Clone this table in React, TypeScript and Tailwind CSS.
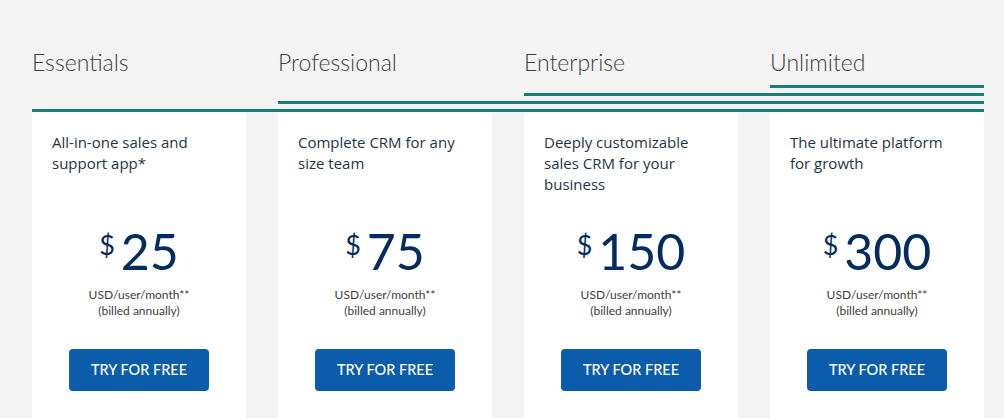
const plans = [
  { name: 'Essentials', desc: 'All-in-one sales and support app*', price: '25' },
  { name: 'Professional', desc: 'Complete CRM for any size team', price: '75' },
  { name: 'Enterprise', desc: 'Deeply customizable sales CRM for your business', price: '150' },
  { name: 'Unlimited', desc: 'The ultimate platform for growth', price: '300' },
]

export default function App() {
  return (
    <div className="h-[418px] overflow-hidden bg-[#f3f3f3] pl-8 pr-5 pt-[48px] font-['Lato','Liberation_Sans',sans-serif]">
      <div className="grid grid-cols-4 gap-8">
        {plans.map((p) => (
          <div key={p.name} className="text-[23px] font-light leading-[28px] text-[#3e3e3c]">
            {p.name}
          </div>
        ))}
      </div>

      <div className="mt-[9px] flex flex-col gap-[5px]">
        <div className="ml-[738px] h-[3px] bg-[#1b7c75]" />
        <div className="ml-[492px] h-[3px] bg-[#1b7c75]" />
        <div className="ml-[246px] h-[3px] bg-[#1b7c75]" />
        <div className="h-[3px] bg-[#1b7c75]" />
      </div>

      <div className="grid grid-cols-4 gap-8">
        {plans.map((p) => (
          <div key={p.name} className="h-[320px] bg-white px-5 pt-[20px]">
            <p className="h-[63px] font-['Open_Sans','Liberation_Sans',sans-serif] text-[15px] leading-[21px] text-[#243447]">
              {p.desc}
            </p>
            <div className="mt-[34px] flex items-start justify-center text-[#032d60]">
              <span className="mr-[6px] mt-[2px] text-[27px] leading-none">$</span>
              <span className="text-[50px] leading-[44px]">{p.price}</span>
            </div>
            <div className="mt-[14px] text-center text-[12px] leading-[16px] text-[#3e3e3c]">
              <div>USD/user/month**</div>
              <div>(billed annually)</div>
            </div>
            <div className="mt-[30px] flex justify-center">
              <button className="h-[42px] w-[140px] rounded-[4px] bg-[#0b5cab] text-[14.5px] font-medium text-white">
                TRY FOR FREE
              </button>
            </div>
          </div>
        ))}
      </div>
    </div>
  )
}
